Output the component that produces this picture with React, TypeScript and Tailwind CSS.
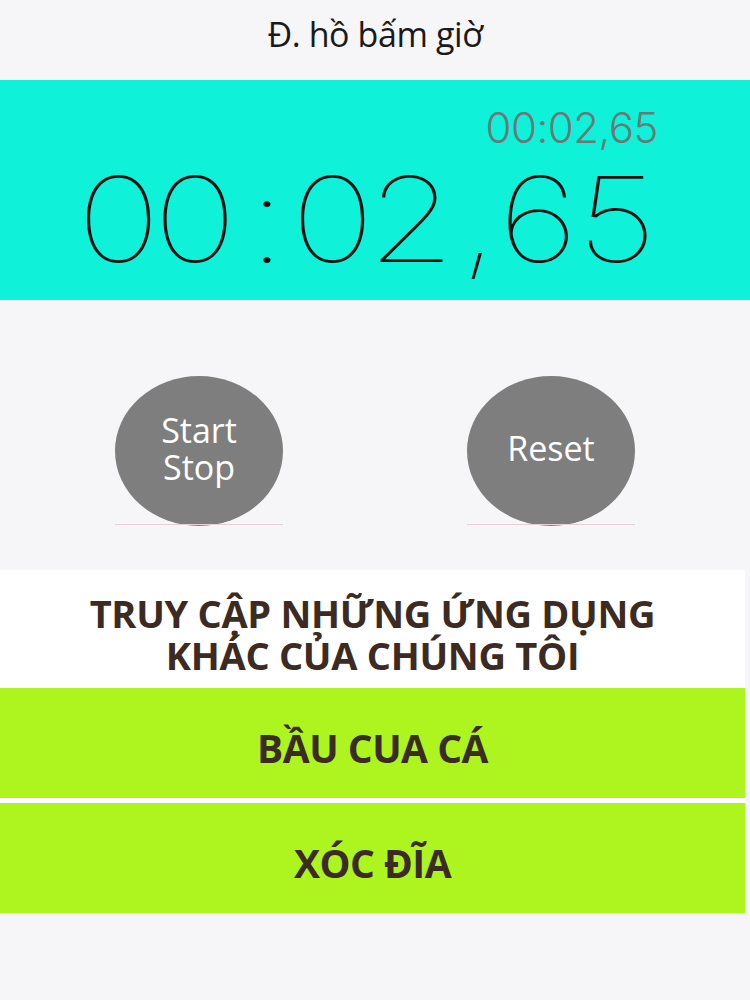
import React from "react";

const RoundButton = ({ children }: { children: React.ReactNode }) => (
  <div className="flex flex-col items-center">
    <button className="w-[168px] h-[150px] rounded-[50%] bg-[#7e7e7e] text-white text-[34px] leading-[37px] font-['Open_Sans',sans-serif] flex flex-col items-center justify-center pb-[4px]">
      {children}
    </button>
    <div className="w-[168px] h-px bg-[#e6cfd6] -mt-[2px]" />
  </div>
);

const AppLink = ({ label }: { label: string }) => (
  <button className="w-[745px] h-[110px] bg-[#aef520] flex items-center justify-center pt-[10px] text-[39px] font-bold text-[#3b2b22] font-['Open_Sans',sans-serif] tracking-[-0.5px]">
    {label}
  </button>
);

export default function App() {
  return (
    <div className="w-[750px] h-[1000px] bg-[#f6f5f8] flex flex-col font-['Open_Sans',sans-serif]">
      <header className="h-[80px] flex items-center justify-center pb-[12px]">
        <h1 className="text-[34px] text-[#1a1a1a] tracking-[-0.4px]">Đ. hồ bấm giờ</h1>
      </header>

      <section className="h-[220px] bg-[#0ff2d9] flex flex-col overflow-hidden">
        <div className="h-[80px] flex items-center justify-end pr-[92px] pt-[14px]">
          <span className="text-[42px] font-light text-[#687a78] font-['Inter',sans-serif] tracking-[-0.5px]">
            00:02,65
          </span>
        </div>
        {/* whole row stretched a bit wider, the thin digits are rounder in the original */}
        <div className="flex items-baseline pl-[64px] origin-left scale-x-120 text-[118px] leading-none font-thin text-[#111] font-['Inter',sans-serif]">
          <span className="tracking-[-6px]">00</span>
          <span className="ml-[15px]">:</span>
          <span className="ml-[4px] tracking-[-6px]">02</span>
          <span className="ml-[10px]">,</span>
          <span className="tracking-[-1px]">65</span>
        </div>
      </section>

      <section className="h-[270px] flex justify-between items-center px-[115px] pt-[30px]">
        <RoundButton>
          <span>Start</span>
          <span>Stop</span>
        </RoundButton>
        <RoundButton>
          <span>Reset</span>
        </RoundButton>
      </section>

      <div className="w-[745px] bg-white flex flex-col">
        <div className="h-[118px] flex flex-col items-center justify-center pt-[10px] text-[38px] leading-[42px] font-bold text-[#3b2b22] tracking-[-0.3px]">
          <span>TRUY CẬP NHỮNG ỨNG DỤNG</span>
          <span>KHÁC CỦA CHÚNG TÔI</span>
        </div>
        <div className="flex flex-col gap-[5px]">
          <AppLink label="BẦU CUA CÁ" />
          <AppLink label="XÓC ĐĨA" />
        </div>
      </div>
    </div>
  );
}
